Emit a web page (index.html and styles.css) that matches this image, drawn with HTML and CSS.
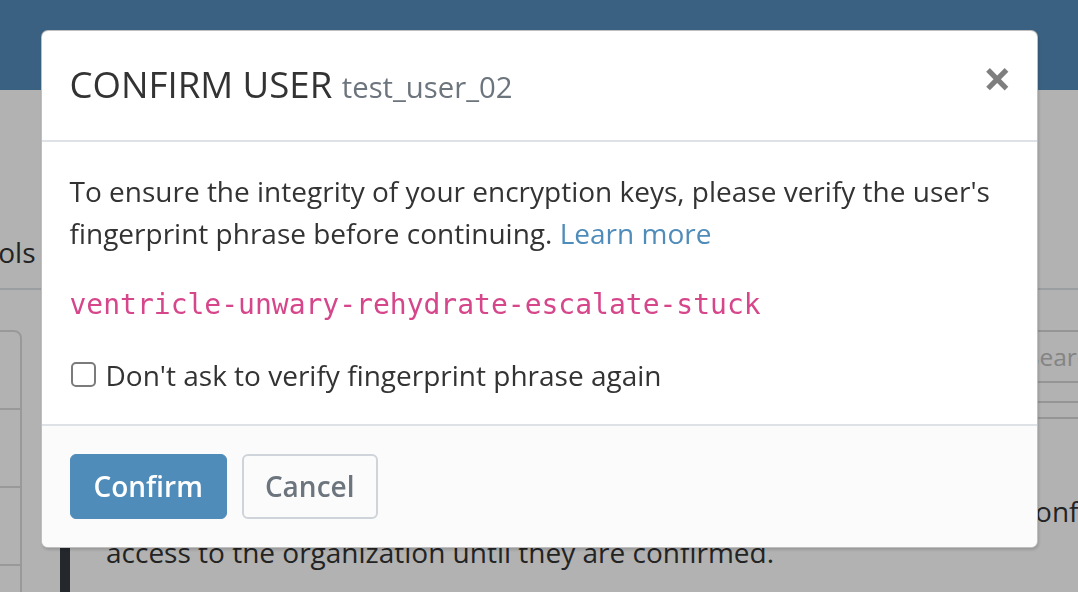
FILE: index.html
```html
<!DOCTYPE html>
<html lang="en">
<head>
<meta charset="utf-8">
<title>Confirm User</title>
<link rel="stylesheet" href="styles.css">
</head>
<body>
<div class="page">
  <header class="navbar"></header>
  <div class="container">
    <nav class="tabs">
      <span class="tab">Tools</span>
    </nav>
    <div class="content">
      <aside class="sidebar">
        <div class="sb-item">All</div>
        <div class="sb-item">Invited</div>
        <div class="sb-item">Accepted</div>
        <div class="sb-item">Confirmed</div>
      </aside>
      <main class="main">
        <div class="toolbar">
          <h1 class="page-title">Users</h1>
          <div class="search">Search</div>
        </div>
        <div class="filters"></div>
        <div class="callout">You have users that have accepted their invitation, but still need to be confirmed. Users will not have access to the organization until they are confirmed.</div>
      </main>
    </div>
  </div>
</div>
<div class="backdrop"></div>
<div class="modal">
  <div class="modal-content">
    <div class="modal-header">
      <h5 class="modal-title">CONFIRM USER <small class="muted">test_user_02</small></h5>
      <button class="close" type="button">×</button>
    </div>
    <div class="modal-body">
      <p>To ensure the integrity of your encryption keys, please verify the user's fingerprint phrase before continuing. <a class="link" href="#">Learn more</a></p>
      <p><code class="phrase">ventricle-unwary-rehydrate-escalate-stuck</code></p>
      <div class="check">
        <input type="checkbox" id="dontAsk" class="check-input">
        <label for="dontAsk" class="check-label">Don't ask to verify fingerprint phrase again</label>
      </div>
    </div>
    <div class="modal-footer">
      <button class="btn btn-primary" type="button">Confirm</button>
      <button class="btn btn-secondary" type="button">Cancel</button>
    </div>
  </div>
</div>
</body>
</html>
```

FILE: styles.css
```css
html, body {
  margin: 0;
  padding: 0;
  overflow: hidden;
  width: 1078px;
  height: 592px;
}

body {
  font-family: "Open Sans", "Liberation Sans", sans-serif;
  font-size: 28px;
  line-height: 1.5;
  color: #333333;
  background: #ffffff;
}

/* ---------- background page ---------- */
.page {
  width: 1078px;
}

.navbar {
  height: 90px;
  background: #548cba;
}

.container {
  margin-left: -240px;
  width: 1700px;
}

.tabs {
  display: flex;
  margin-top: 127px;
  padding-left: 178px;
  border-bottom: 2px solid #dee2e6;
}

.tab {
  padding: 14px 28px 15px;
  color: #333333;
}

.content {
  display: flex;
  gap: 38px;
  margin-top: 40px;
}

.sidebar {
  flex: 0 0 258px;
  border: 2px solid #dcdcdc;
  border-radius: 8px;
  align-self: flex-start;
}

.sb-item {
  padding: 17px 28px;
  border-bottom: 2px solid #dcdcdc;
  line-height: 42px;
}

.main {
  flex: 0 0 1422px;
}

.toolbar {
  display: flex;
  height: 53px;
}

.page-title {
  flex: 0 0 950px;
  margin: 0;
  font-size: 35px;
  font-weight: 400;
  line-height: 53px;
}

.search {
  flex: 0 0 420px;
  box-sizing: border-box;
  height: 53px;
  padding: 5px 14px 5px 16px;
  border-top: 2px solid #d6d6d6;
  border-bottom: 2px solid #d6d6d6;
  font-size: 24.5px;
  line-height: 39px;
  color: #bdbdbd;
}

.filters {
  margin-top: 18px;
  height: 14px;
  border-top: 2px solid #d6d6d6;
  border-bottom: 2px solid #d6d6d6;
}

.callout {
  box-sizing: border-box;
  width: 1420px;
  margin-top: 37px;
  padding: 35px 36px;
  border-left: 10px solid #343a40;
  line-height: 41px;
  color: #333333;
}

/* ---------- backdrop ---------- */
.backdrop {
  position: fixed;
  inset: 0;
  background: rgba(0, 0, 0, 0.3);
}

/* ---------- modal ---------- */
.modal {
  position: fixed;
  inset: 0;
  display: flex;
  justify-content: center;
  align-items: flex-start;
  padding-top: 30px;
}

.modal-content {
  box-sizing: border-box;
  width: 997px;
  background: #ffffff;
  border: 1px solid rgba(0, 0, 0, 0.25);
  border-radius: 7px;
  box-shadow: 1px 2px 3px rgba(0, 0, 0, 0.15);
  overflow: hidden;
}

.modal-header {
  display: flex;
  align-items: flex-start;
  padding: 27px 28px 29px;
  border-bottom: 2px solid #dee2e6;
}

.modal-title {
  margin: 0;
  font-size: 36.6px;
  font-weight: 400;
  line-height: 52.5px;
  color: #333333;
}

.muted {
  font-size: 29.3px;
  line-height: 1;
  color: #6c757d;
}

.close {
  margin: -29px -31px -28px auto;
  padding: 28px;
  border: 0;
  background: transparent;
  font-family: "Open Sans", "Liberation Sans", sans-serif;
  font-size: 50px;
  font-weight: 700;
  line-height: 42px;
  color: #000000;
  opacity: 0.5;
  cursor: pointer;
}

.modal-body {
  padding: 28px;
}

.modal-body p {
  margin: 0 0 28px;
}

.link {
  color: #4f8cba;
  text-decoration: none;
}

.phrase {
  font-family: "DejaVu Sans Mono", "Liberation Mono", monospace;
  font-size: 28px;
  color: #d6468b;
}

.check {
  display: flex;
  align-items: center;
  gap: 10px;
  margin-left: 1px;
}

.check-input {
  appearance: none;
  -webkit-appearance: none;
  box-sizing: border-box;
  width: 25px;
  height: 25px;
  margin: 0;
  border: 2px solid #7b7b7b;
  border-radius: 5px;
  background: #ffffff;
}

.check-label {
  line-height: 42px;
}

.modal-footer {
  display: flex;
  align-items: center;
  gap: 15px;
  padding: 28px;
  border-top: 2px solid #dee2e6;
  background: #fbfbfb;
}

.btn {
  box-sizing: border-box;
  height: 65px;
  padding: 0 23px;
  border: 1px solid transparent;
  border-radius: 6px;
  font-family: "Open Sans", "Liberation Sans", sans-serif;
  font-size: 28px;
  font-weight: 600;
  line-height: 42px;
  cursor: pointer;
}

.btn-primary {
  background: #4f8cba;
  border-color: #4f8cba;
  color: #ffffff;
}

.btn-secondary {
  padding: 0 21px;
  background: #fbfbfb;
  border: 2px solid #ced4da;
  color: #6c757d;
}
```
